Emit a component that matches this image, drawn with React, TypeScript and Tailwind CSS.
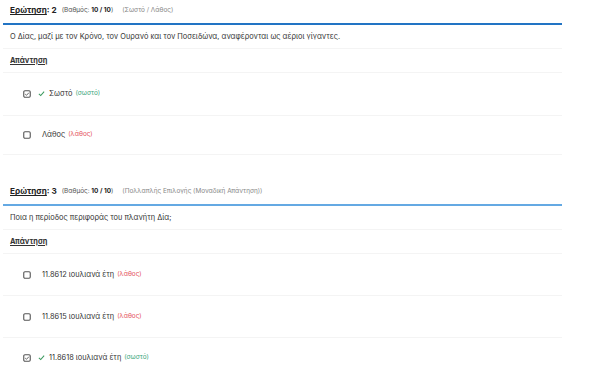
import React from "react";

const font = { fontFamily: "Inter, 'Noto Sans', sans-serif" };

function Box({ checked }: { checked: boolean }) {
  return (
    <svg width="8" height="8" viewBox="0 0 8 8" className="shrink-0">
      <rect x="0.75" y="0.75" width="6.5" height="6.5" rx="1.2" fill="none" stroke="#555" strokeWidth="1.1" />
      {checked && <path d="M2.2 4.1 L3.5 5.3 L5.9 2.7" fill="none" stroke="#555" strokeWidth="0.9" />}
    </svg>
  );
}

function Tick() {
  return (
    <svg width="7" height="7" viewBox="0 0 8 8" className="shrink-0">
      <path d="M1 4.3 L3.1 6.3 L7 1.8" fill="none" stroke="#3c9a5f" strokeWidth="1.2" />
    </svg>
  );
}

function Option({ text, correct, checked, h }: { text: string; correct: boolean; checked: boolean; h: string }) {
  return (
    <div className={`flex items-center border-b border-[#f4f4f4] pl-[20px] ${h}`}>
      <Box checked={checked} />
      {checked ? (
        <span className="ml-[7px] flex items-center">
          <Tick />
          <span className="ml-[4px] text-[7.4px] text-[#333]">{text}</span>
        </span>
      ) : (
        <span className="ml-[11px] text-[7.4px] text-[#333]">{text}</span>
      )}
      <span className={`ml-[3px] text-[6.4px] ${correct ? "text-[#3aa57a]" : "text-[#e5535c]"}`}>
        {correct ? "(σωστό)" : "(λάθος)"}
      </span>
    </div>
  );
}

function Header({ num, type, color }: { num: string; type: string; color: string }) {
  return (
    <div className={`flex h-[25px] items-center border-b-2 pl-[7px] pb-[2px] ${color}`}>
      <span className="text-[8.2px] font-bold text-[#222] underline underline-offset-1">Ερώτηση</span>
      <span className="text-[8.2px] font-bold text-[#222]">: {num}</span>
      <span className="ml-[5px] text-[6.4px] text-[#555]">
        (Βαθμός: <span className="font-bold text-[#222]">10 / 10</span>)
      </span>
      <span className="ml-[9px] text-[6.4px] text-[#888]">{type}</span>
    </div>
  );
}

export default function App() {
  return (
    <div className="h-[374px] w-[600px] overflow-hidden bg-white" style={font}>
      <div className="ml-[3px] w-[559px]">
        <Header num="2" type="(Σωστό / Λάθος)" color="border-[#2274c4]" />
        <div className="flex h-[24px] items-center border-b border-[#f4f4f4] pl-[7px] text-[7.4px] text-[#333]">
          Ο Δίας, μαζί με τον Κρόνο, τον Ουρανό και τον Ποσειδώνα, αναφέρονται ως αέριοι γίγαντες.
        </div>
        <div className="flex h-[24px] items-center border-b border-[#f4f4f4] pl-[7px] text-[7.4px] font-bold text-[#333] underline underline-offset-1">
          Απάντηση
        </div>
        <Option text="Σωστό" correct checked h="h-[43px]" />
        <Option text="Λάθος" correct={false} checked={false} h="h-[39px]" />
        <div className="h-[26px]" />
        <Header num="3" type="(Πολλαπλής Επιλογής (Μοναδική Απάντηση))" color="border-[#64a9e3]" />
        <div className="flex h-[24px] items-center border-b border-[#f4f4f4] pl-[7px] text-[7.4px] text-[#333]">
          Ποια η περίοδος περιφοράς του πλανήτη Δία;
        </div>
        <div className="flex h-[24px] items-center border-b border-[#f4f4f4] pl-[7px] text-[7.4px] font-bold text-[#333] underline underline-offset-1">
          Απάντηση
        </div>
        <Option text="11.8612 ιουλιανά έτη" correct={false} checked={false} h="h-[42px]" />
        <Option text="11.8615 ιουλιανά έτη" correct={false} checked={false} h="h-[42px]" />
        <Option text="11.8618 ιουλιανά έτη" correct checked h="h-[41px]" />
      </div>
    </div>
  );
}
